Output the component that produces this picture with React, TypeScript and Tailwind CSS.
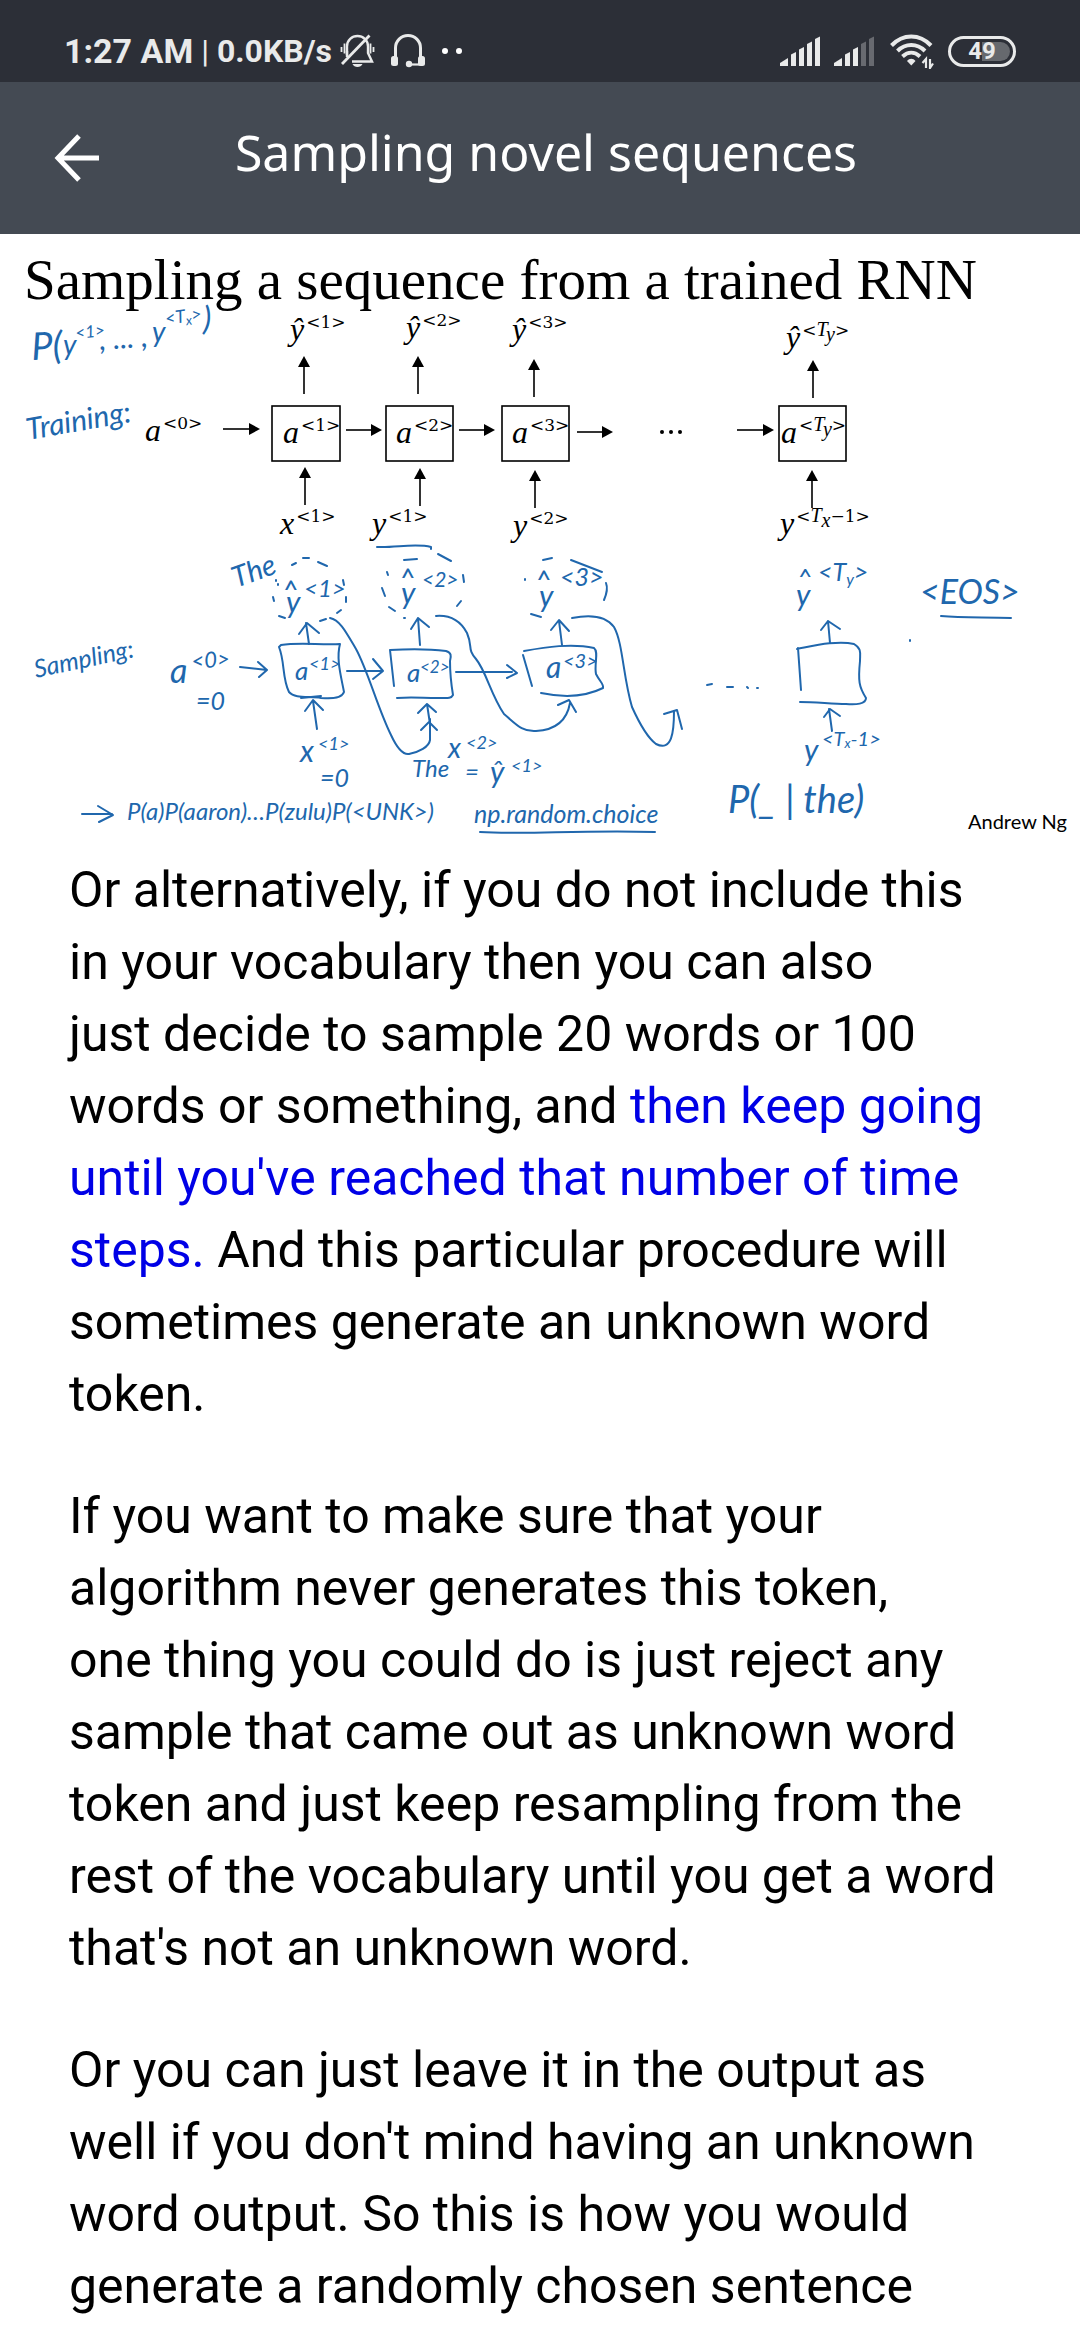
import type { ReactNode } from "react";

const INK = "#2067ad";

/* ---------- status bar icons ---------- */

function SilentBell() {
  return (
    <svg width="36" height="36" viewBox="0 0 36 36" fill="none" stroke="currentColor" strokeWidth="2.4" aria-hidden="true">
      <path d="M7 24V13.500C7 7 12 3 17.500 3S28 7 28 13.500V20l4 8.500H12" />
      <path d="M2 31 29.500 2.500" strokeWidth="2.800" />
      <path d="M7 18v4" />
      <path d="M1.500 14v5M4.500 10.500v10M30.500 10.500v10M33.500 14v5" strokeWidth="1.800" />
      <path d="M12.500 31h10c-1.500 4-8.500 4-10 0z" fill="currentColor" stroke="none" />
    </svg>
  );
}

function Headset() {
  return (
    <svg width="36" height="36" viewBox="0 0 36 36" fill="none" stroke="currentColor" strokeWidth="3" aria-hidden="true">
      <path d="M5.500 24V15a12.500 12.500 0 0 1 25 0v9" />
      <rect x="1" y="23" width="7" height="10" rx="2.500" fill="currentColor" stroke="none" />
      <rect x="28" y="23" width="7" height="10" rx="2.500" fill="currentColor" stroke="none" />
      <path d="M19 31.500h11" strokeWidth="2.200" />
      <circle cx="19" cy="31" r="3.200" fill="currentColor" stroke="none" />
    </svg>
  );
}

function Signal({ level }: { level: number }) {
  const bars = ["M0 30v-3l8-5v8z", "M11 30V18.500l5-2.500v14z", "M19 30V13.500l5-2.500v19z", "M27 30V8l5-2.500V30z", "M35 30V3l5-2.500V30z"];
  return (
    <svg width="40" height="31" viewBox="0 0 40 31" fill="currentColor" aria-hidden="true">
      {bars.map((d, i) => (
        <path key={d} d={d} opacity={i < level ? 1 : 0.32} />
      ))}
    </svg>
  );
}

function Wifi() {
  return (
    <svg width="44" height="35" viewBox="0 0 44 35" fill="none" stroke="currentColor" strokeWidth="4" aria-hidden="true">
      <path d="M1.500 11.500C13 -.5 29.500-.5 41 11.500" />
      <path d="M7.500 17c8-8 19.500-8 27.500 0" />
      <path d="M12.500 22.500c5.500-5 12-5 17.500 0" />
      <path d="M17 27c2.500-3 6-3 8.500 0l-4.200 4.500z" fill="currentColor" stroke="none" />
      <path d="M36 34V25l-3.500 4M40 25v9l3-4.500" strokeWidth="2.200" />
    </svg>
  );
}

function StatusBar() {
  return (
    <div className="flex h-[82px] items-center justify-between bg-[#2c2f37] px-16 pt-5 font-['Roboto',sans-serif] font-bold text-[#e9eaea]">
      <div className="flex items-center">
        <span className="text-[34px] leading-9">1:27 AM</span>
        <span className="ml-2 text-[32px] leading-9">
          <span className="font-normal">|</span> 0.0KB/s
        </span>
        <span className="ml-2">
          <SilentBell />
        </span>
        <span className="ml-3.5">
          <Headset />
        </span>
        <span className="ml-4 flex gap-2">
          <i className="h-1.5 w-1.5 rounded-full bg-white" />
          <i className="h-1.5 w-1.5 rounded-full bg-white" />
        </span>
      </div>
      <div className="flex items-center">
        <Signal level={5} />
        <span className="ml-3.5">
          <Signal level={3} />
        </span>
        <span className="ml-4">
          <Wifi />
        </span>
        <div className="relative ml-3.5 flex h-[31px] w-[68px] items-center justify-center rounded-full border-3 border-current">
          <i className="absolute top-[3px] right-[3px] h-[19px] w-[28px] rounded-r-full bg-[#66696e]" />
          <span className="relative text-[24px] leading-6">49</span>
        </div>
      </div>
    </div>
  );
}

function TitleBar() {
  return (
    <header className="flex h-[152px] items-center bg-[#444a53] px-[54px] text-white">
      <button type="button" aria-label="Back" className="flex w-12 shrink-0">
        <svg width="46" height="48" viewBox="0 0 46 48" fill="none" stroke="currentColor" strokeWidth="5" aria-hidden="true">
          <path d="M25 2 4 24l21 22M4 24h41" />
        </svg>
      </button>
      <h1 className="flex-1 pr-9 pb-3 text-center font-['Noto_Sans',sans-serif] text-[50px] leading-[68px]">
        Sampling novel sequences
      </h1>
    </header>
  );
}

/* ---------- lecture slide ---------- */

function Term({ x, y, base, sup }: { x: number; y: number; base: string; sup: ReactNode }) {
  return (
    <text x={x} y={y} fontFamily="'Liberation Serif', serif" fontSize="32" fontStyle="italic">
      {base}
      <tspan dx="2" dy="-12" fontFamily="'DejaVu Serif', serif" fontSize="17" fontStyle="normal">
        {sup}
      </tspan>
    </text>
  );
}

const tSub = (sub: string, rest = "") => (
  <>
    &lt;
    <tspan fontFamily="'Liberation Serif', serif" fontSize="20" fontStyle="italic">T</tspan>
    <tspan dy="5" fontFamily="'Liberation Serif', serif" fontSize="20" fontStyle="italic">{sub}</tspan>
    <tspan dy="-5">{rest}&gt;</tspan>
  </>
);

function Up({ x, y }: { x: number; y: number }) {
  return (
    <g>
      <path d={`M${x} ${y + 38}V${y + 8}`} stroke="#000" strokeWidth="1.6" />
      <path d={`M${x - 6} ${y + 11}h12L${x} ${y}z`} />
    </g>
  );
}

function Right({ x, y, to }: { x: number; y: number; to: number }) {
  return (
    <g>
      <path d={`M${x} ${y}H${to - 8}`} stroke="#000" strokeWidth="1.6" />
      <path d={`M${to - 11} ${y - 6}v12L${to} ${y}z`} />
    </g>
  );
}

function Ink({ x, y, size, turn = 0, children }: { x: number; y: number; size: number; turn?: number; children: ReactNode }) {
  return (
    <text x={x} y={y} fontSize={size} transform={`rotate(${turn} ${x} ${y})`}>
      {children}
    </text>
  );
}

const penStrokes = [
  // feeding arrow and first cell
  "M240 667l27 3M258 662l9 8-8 7",
  "M281 645c18-3 38 0 59-1-4 15 1 32 4 48-2 6-10 7-23 6-12-2-26 1-32-6-7-14-4-30-10-45z",
  "M301 698l20-2",
  "M309 644l-3-21M299 634l8-11 12 10",
  "M317 729l-4-28M305 711l8-11 10 10",
  // dashed ring round the first output
  "M292 565l4-2M303 558l6 0M318 562l9 4M343 580l1 5M346 597v5M341 610l-4 3M320 621l6-2M279 616l6 2M273 597l1 4M276 580v1M278 584v1",
  // first output to second input
  "M330 618c10 2 16 14 26 31 12 22 22 60 35 86 6 13 12 20 18 19 10-2 20-7 21-14v-21M421 730l8-8 8 8",
  "M430 724l-3-20M418 713l9-9 9 8",
  // second cell
  "M347 671h34M373 659l10 12-10 8",
  "M394 686l-4-36c18-1 40-1 56 1 6 2 5 5 4 10 0 11 1 22 3 34-2 4-6 3-16 3-14 0-26-1-40 0",
  "M420 645l-2-27M411 629l7-11 11 9",
  "M404 560l13-1M438 554l13 7M463 575l1 7M461 601l-4 5M389 607l6 4M382 588l3 8M387 572l1 3M404 618h1",
  // second output to third input
  "M436 616c13-1 24 4 31 17 6 14 0 16 9 26 10 12 15 36 28 55 12 10 18 18 32 17 20-1 31-11 34-28M558 705l11-5 7 12",
  // third cell
  "M456 672h56M507 665l10 8-10 5",
  "M523 655l9 31M524 651c22-4 48-8 70-3 5 4 0 16 2 26 4 8 8 10 7 14-18 9-38 10-62 5",
  "M562 645l-3-24M551 630l8-10 10 11",
  "M543 560l9-2M571 560l31 12M606 583c2 5 1 10-2 17M525 579v1M531 614l10 3",
  // third output leading on
  "M572 618c20-4 34-2 42 9 9 16 9 50 18 80 9 20 16 31 24 37 16 8 18-12 18-33M664 714l13-4 5 19",
  "M707 685l5-1M727 687h6M747 687l1 1M757 688h1",
  // last cell
  "M801 690l-3-42M797 649c16-3 40-9 57-5 8 5 6 9 6 17-2 20-1 26 6 37 0 6-10 7-20 6-14 0-30-2-46-2",
  "M830 643l-2-22M821 630l7-9 12 8",
  "M832 731l-3-22M824 717l6-8 10 7",
  // underlines and pointer
  "M377 547c18 1 38-4 54 0v2M480 832c48 3 92-2 175 0M941 616c22 2 44 1 70 2M910 640v1",
  "M82 814l30 0M98 806l15 9-14 7",
];

function Slide() {
  return (
    <figure>
      <h2 className="h-16 pt-3.5 pl-6 font-['Liberation_Serif',serif] text-[57px] leading-[64px] whitespace-nowrap text-black">
        Sampling a sequence from a trained RNN
      </h2>
      <svg
        viewBox="0 298 1080 552"
        className="block w-full overflow-visible"
        role="img"
        aria-label="Training and sampling diagrams of a recurrent network"
      >
        <Term x={290} y={340} base="ŷ" sup="<1>" />
        <Term x={406} y={338} base="ŷ" sup="<2>" />
        <Term x={512} y={340} base="ŷ" sup="<3>" />
        <Term x={786} y={348} base="ŷ" sup={tSub("y")} />
        <Term x={145} y={441} base="a" sup="<0>" />
        <Term x={283} y={443} base="a" sup="<1>" />
        <Term x={396} y={443} base="a" sup="<2>" />
        <Term x={512} y={443} base="a" sup="<3>" />
        <Term x={781} y={443} base="a" sup={tSub("y")} />
        <Term x={280} y={534} base="x" sup="<1>" />
        <Term x={372} y={534} base="y" sup="<1>" />
        <Term x={513} y={536} base="y" sup="<2>" />
        <Term x={780} y={534} base="y" sup={tSub("x", "−1")} />
        <g fill="none" stroke="#000" strokeWidth="1.6">
          <rect x="272" y="406" width="68" height="55" />
          <rect x="386" y="406" width="67" height="55" />
          <rect x="502" y="406" width="67" height="55" />
          <rect x="779" y="406" width="67" height="55" />
        </g>
        <Up x={304} y={356} />
        <Up x={418} y={356} />
        <Up x={534} y={359} />
        <Up x={813} y={360} />
        <Up x={305} y={467} />
        <Up x={420} y={468} />
        <Up x={535} y={470} />
        <Up x={812} y={470} />
        <Right x={223} y={429} to={260} />
        <Right x={346} y={430} to={382} />
        <Right x={459} y={430} to={495} />
        <Right x={577} y={432} to={613} />
        <Right x={737} y={430} to={774} />
        <circle cx="662" cy="432" r="2" />
        <circle cx="671" cy="432" r="2" />
        <circle cx="680" cy="432" r="2" />

        <g fill="none" stroke={INK} strokeWidth="2" strokeLinecap="round" strokeLinejoin="round">
          {penStrokes.map((d) => (
            <path key={d} d={d} />
          ))}
        </g>

        <g fill={INK} fontFamily="Lato, sans-serif" fontStyle="italic">
          <Ink x={32} y={360} size={38} turn={-3}>P(</Ink>
          <Ink x={63} y={355} size={28}>y</Ink>
          <Ink x={76} y={339} size={17} turn={-6}>&lt;1&gt;</Ink>
          <Ink x={100} y={350} size={30} turn={-4}>, ... ,</Ink>
          <Ink x={152} y={342} size={28}>y</Ink>
          <Ink x={166} y={325} size={18} turn={-8}>
            &lt;T<tspan fontSize="13" dy="3">x</tspan><tspan dy="-3">&gt;</tspan>
          </Ink>
          <Ink x={203} y={330} size={32}>)</Ink>
          <Ink x={28} y={440} size={30} turn={-10}>Training:</Ink>

          <Ink x={36} y={678} size={25} turn={-12}>Sampling:</Ink>
          <Ink x={170} y={683} size={34}>a</Ink>
          <Ink x={192} y={669} size={22} turn={-4}>&lt;0&gt;</Ink>
          <Ink x={196} y={710} size={25}>=0</Ink>

          <Ink x={236} y={588} size={29} turn={-20}>The</Ink>
          <Ink x={282} y={602} size={28}>^</Ink>
          <Ink x={286} y={613} size={30}>y</Ink>
          <Ink x={304} y={597} size={24}>&lt;1&gt;</Ink>
          <Ink x={295} y={680} size={26}>a</Ink>
          <Ink x={309} y={670} size={18}>&lt;1&gt;</Ink>
          <Ink x={300} y={762} size={30}>x</Ink>
          <Ink x={318} y={750} size={18}>&lt;1&gt;</Ink>
          <Ink x={320} y={787} size={25}>=0</Ink>

          <Ink x={399} y={590} size={28}>^</Ink>
          <Ink x={401} y={604} size={30}>y</Ink>
          <Ink x={422} y={587} size={21}>&lt;2&gt;</Ink>
          <Ink x={407} y={682} size={26}>a</Ink>
          <Ink x={420} y={673} size={17}>&lt;2&gt;</Ink>
          <Ink x={412} y={777} size={24}>The</Ink>
          <Ink x={448} y={758} size={28}>x</Ink>
          <Ink x={466} y={749} size={18}>&lt;2&gt;</Ink>
          <Ink x={465} y={780} size={24}>=</Ink>
          <Ink x={490} y={783} size={30}>ŷ</Ink>
          <Ink x={511} y={772} size={18}>&lt;1&gt;</Ink>

          <Ink x={535} y={592} size={28}>^</Ink>
          <Ink x={539} y={607} size={30}>y</Ink>
          <Ink x={560} y={586} size={25}>&lt;3&gt;</Ink>
          <Ink x={546} y={678} size={30}>a</Ink>
          <Ink x={563} y={668} size={20}>&lt;3&gt;</Ink>

          <Ink x={797} y={587} size={26}>^</Ink>
          <Ink x={796} y={606} size={30}>y</Ink>
          <Ink x={818} y={581} size={25}>
            &lt;T<tspan fontSize="16" dy="4">y</tspan><tspan dy="-4">&gt;</tspan>
          </Ink>
          <Ink x={804} y={761} size={30}>y</Ink>
          <Ink x={822} y={746} size={20}>
            &lt;T<tspan fontSize="13" dy="2">x</tspan><tspan dy="-2">-1&gt;</tspan>
          </Ink>
          <Ink x={920} y={604} size={34}>&lt;EOS&gt;</Ink>

          <Ink x={127} y={820} size={24}>P(a)P(aaron)…P(zulu)P(&lt;UNK&gt;)</Ink>
          <Ink x={474} y={823} size={25}>np.random.choice</Ink>
          <Ink x={728} y={813} size={38}>P(_ | the)</Ink>
        </g>
        <text x="968" y="829" fontFamily="Lato, sans-serif" fontSize="20">Andrew Ng</text>
      </svg>
    </figure>
  );
}

/* ---------- transcript ---------- */

function Transcript() {
  return (
    <article className="space-y-[50px] px-[69px] pt-1 font-['Roboto',sans-serif] text-[50px] leading-[72px] text-black">
      <p>
        Or alternatively, if you do not include this in your vocabulary then you can also
        <br />
        just decide to sample 20 words or 100 words or something, and{" "}
        <span className="text-[#0000e6]">then keep going until you've reached that number of time steps.</span> And this
        particular procedure will sometimes generate an unknown word token.
      </p>
      <p>
        If you want to make sure that your algorithm never generates this token,
        <br />
        one thing you could do is just reject any sample that came out as unknown word token and just keep resampling
        from the rest of the vocabulary until you get a word that's not an unknown word.
      </p>
      <p>
        Or you can just leave it in the output as well if you don't mind having an unknown word output. So this is how
        you would generate a randomly chosen sentence
      </p>
    </article>
  );
}

export default function App() {
  return (
    <div className="min-h-screen bg-white">
      <StatusBar />
      <TitleBar />
      <main>
        <Slide />
        <Transcript />
      </main>
    </div>
  );
}
